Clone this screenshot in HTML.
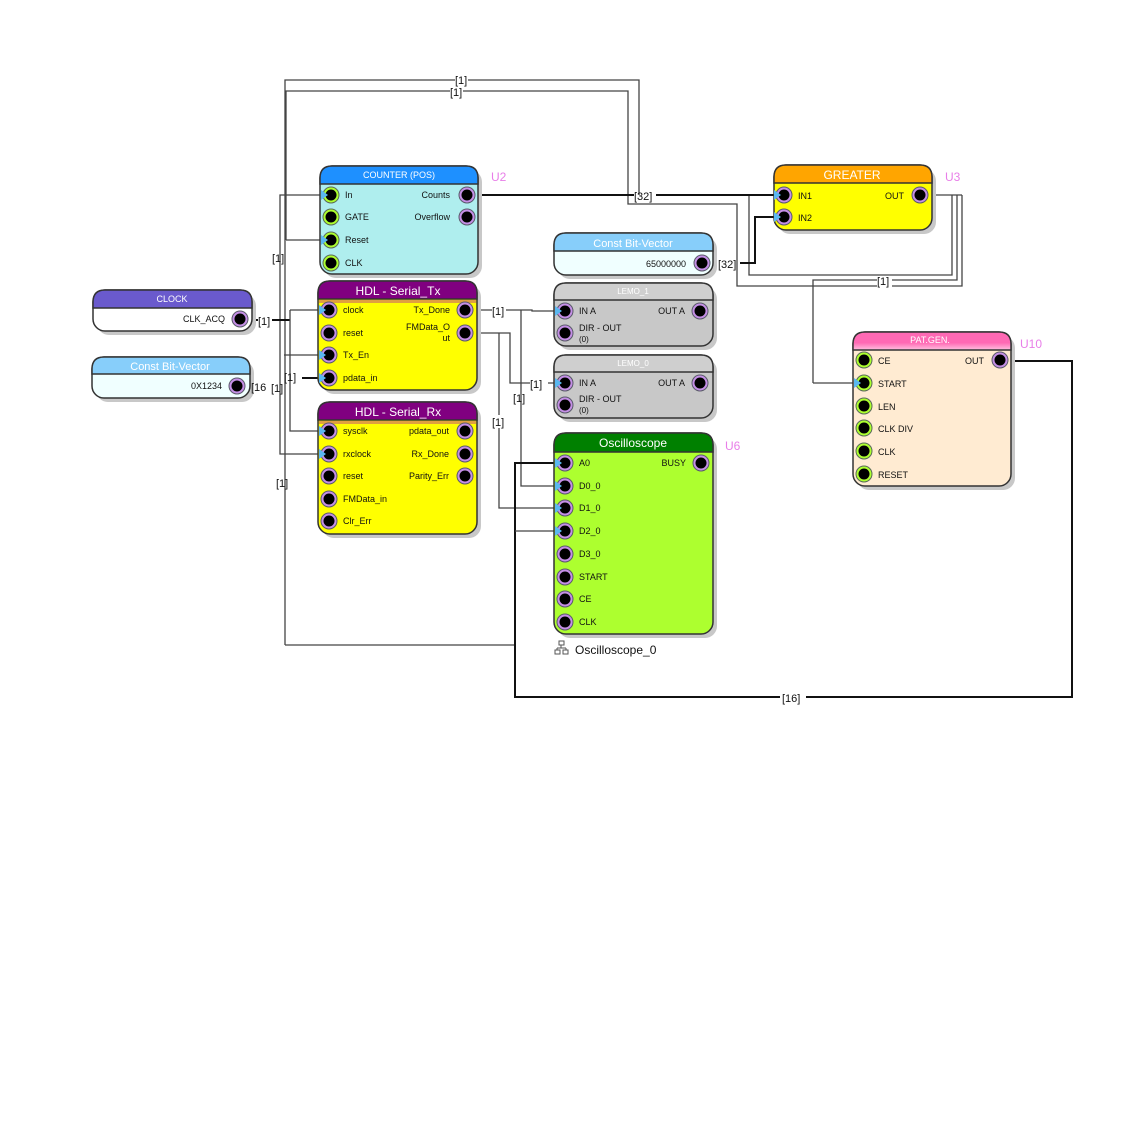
<!DOCTYPE html>
<html><head><meta charset="utf-8"><style>
html,body{margin:0;padding:0;background:#fff;width:1132px;height:1122px;overflow:hidden}
svg{display:block;font-family:"Liberation Sans",Arial,sans-serif}
.w{fill:none;stroke:#444;stroke-width:1.3}
.wb{fill:none;stroke:#111;stroke-width:2}
.lb{font-size:11px;fill:#111}
.pl{font-size:9px;fill:#111}
.ht{font-size:12px;fill:#fff;text-anchor:middle}
.hs{font-size:9px;fill:#fff;text-anchor:middle}
.u{font-size:12px;fill:#e87ee8}
.bx{stroke:#333;stroke-width:1.5}
.sh{fill:#c8c8c8}
</style></head><body>
<svg width="1132" height="1122" viewBox="0 0 1132 1122">
<defs>
<g id="pg"><circle r="8" fill="#adff2f" stroke="#5a6a5a" stroke-width="1"/><circle r="5.5" fill="#000"/></g>
<g id="pv"><circle r="8" fill="#c58fe6" stroke="#5a5a6a" stroke-width="1"/><circle r="5.5" fill="#000"/></g>
<polygon id="ar" points="-10,-5 -3,0 -10,5" fill="#5ab8f0"/>
</defs>

<!-- wires -->
<path class="w" d="M285,645 V80 H455 M468,80 H639 V195"/>
<path class="w" d="M286,240 V91 H450 M463,91 H628 V204 H737 V286 H877 M892,286 H962 V195"/>
<path class="w" d="M286,240 H320"/>
<path class="w" d="M320,195 H280 V454 H320"/>
<path class="w" d="M285,645 H515"/>
<path class="w" d="M749,195 V275 H952 V195 M813,383 V280 H877 M892,280 H957 V195 M932,195 H962"/>
<path class="w" d="M813,383 H853"/>
<path class="wb" d="M478,195 H634 M656,195 H774"/>
<path class="wb" d="M740,263 H755 V217 H774"/>
<path class="wb" d="M250,320 H258 M272,320 H290"/>
<path class="w" d="M290,310 V431 H320 M290,310 H320 M284,355 H320"/>
<path class="wb" d="M302,378 H318"/>
<path class="w" d="M465,310 H492 M506,310 H532 V311 H554 M521,310 V486 H554"/>
<path class="w" d="M465,333 H510 V383 H530 M548,383 H554 M499,333 V415 M499,428 V508 H554"/>
<path class="wb" d="M554,463 H515 V697 H780 M806,697 H1072 V361 H1000"/>
<path class="w" d="M515,531 H554"/>

<!-- COUNTER -->
<rect class="sh" x="324" y="170" width="158" height="108" rx="12"/>
<rect class="bx" x="320" y="166" width="158" height="108" rx="12" fill="#afeeee"/>
<path d="M320,184 V178 Q320,166 332,166 H466 Q478,166 478,178 V184 Z" fill="#1e90ff" class="bx"/>
<text class="hs" x="399" y="178">COUNTER (POS)</text>
<text class="u" x="491" y="181">U2</text>
<use href="#pg" x="331" y="195"/><use href="#ar" x="331" y="195"/>
<use href="#pg" x="331" y="217"/>
<use href="#pg" x="331" y="240"/><use href="#ar" x="331" y="240"/>
<use href="#pg" x="331" y="263"/>
<use href="#pv" x="467" y="195"/><use href="#pv" x="467" y="217"/>
<g class="pl"><text x="345" y="198">In</text><text x="345" y="220">GATE</text><text x="345" y="243">Reset</text><text x="345" y="266">CLK</text>
<text x="450" y="198" text-anchor="end">Counts</text><text x="450" y="220" text-anchor="end">Overflow</text></g>

<!-- CLOCK -->
<rect class="sh" x="97" y="294" width="159" height="41" rx="12"/>
<rect class="bx" x="93" y="290" width="159" height="41" rx="12" fill="#fff"/>
<path d="M93,308 V302 Q93,290 105,290 H240 Q252,290 252,302 V308 Z" fill="#6a5acd" class="bx"/>
<text class="hs" x="172" y="302">CLOCK</text>
<use href="#pv" x="240" y="319"/>
<text class="pl" x="225" y="322" text-anchor="end">CLK_ACQ</text>

<!-- Const 1 -->
<rect class="sh" x="96" y="361" width="158" height="41" rx="12"/>
<rect class="bx" x="92" y="357" width="158" height="41" rx="12" fill="#f0ffff"/>
<path d="M92,374 V369 Q92,357 104,357 H238 Q250,357 250,369 V374 Z" fill="#87cefa" class="bx"/>
<text class="ht" x="170" y="370" style="font-size:11px">Const Bit-Vector</text>
<use href="#pv" x="237" y="386"/>
<text class="pl" x="222" y="389" text-anchor="end">0X1234</text>

<!-- Serial_Tx -->
<rect class="sh" x="322" y="285" width="159" height="109" rx="12"/>
<rect class="bx" x="318" y="281" width="159" height="109" rx="12" fill="#ffff00"/>
<path d="M318,299 V293 Q318,281 330,281 H465 Q477,281 477,293 V299 Z" fill="#800080" class="bx"/>
<rect x="319" y="300" width="157" height="3" fill="#e0a040"/>
<text class="ht" x="398" y="295">HDL - Serial_Tx</text>
<use href="#pv" x="329" y="310"/><use href="#ar" x="329" y="310"/>
<use href="#pv" x="329" y="333"/>
<use href="#pv" x="329" y="355"/><use href="#ar" x="329" y="355"/>
<use href="#pv" x="329" y="378"/><use href="#ar" x="329" y="378"/>
<use href="#pv" x="465" y="310"/><use href="#pv" x="465" y="333"/>
<g class="pl"><text x="343" y="313">clock</text><text x="343" y="336">reset</text><text x="343" y="358">Tx_En</text><text x="343" y="381">pdata_in</text>
<text x="450" y="313" text-anchor="end">Tx_Done</text><text x="450" y="330" text-anchor="end">FMData_O</text><text x="450" y="341" text-anchor="end">ut</text></g>

<!-- Serial_Rx -->
<rect class="sh" x="322" y="406" width="159" height="132" rx="12"/>
<rect class="bx" x="318" y="402" width="159" height="132" rx="12" fill="#ffff00"/>
<path d="M318,420 V414 Q318,402 330,402 H465 Q477,402 477,414 V420 Z" fill="#800080" class="bx"/>
<rect x="319" y="421" width="157" height="3" fill="#e0a040"/>
<text class="ht" x="398" y="416">HDL - Serial_Rx</text>
<use href="#pv" x="329" y="431"/><use href="#ar" x="329" y="431"/>
<use href="#pv" x="329" y="454"/><use href="#ar" x="329" y="454"/>
<use href="#pv" x="329" y="476"/><use href="#pv" x="329" y="499"/><use href="#pv" x="329" y="521"/>
<use href="#pv" x="465" y="431"/><use href="#pv" x="465" y="454"/><use href="#pv" x="465" y="476"/>
<g class="pl"><text x="343" y="434">sysclk</text><text x="343" y="457">rxclock</text><text x="343" y="479">reset</text><text x="343" y="502">FMData_in</text><text x="343" y="524">Clr_Err</text>
<text x="449" y="434" text-anchor="end">pdata_out</text><text x="449" y="457" text-anchor="end">Rx_Done</text><text x="449" y="479" text-anchor="end">Parity_Err</text></g>

<!-- Const 2 -->
<rect class="sh" x="558" y="237" width="159" height="42" rx="12"/>
<rect class="bx" x="554" y="233" width="159" height="42" rx="12" fill="#f0ffff"/>
<path d="M554,251 V245 Q554,233 566,233 H701 Q713,233 713,245 V251 Z" fill="#87cefa" class="bx"/>
<text class="ht" x="633" y="247" style="font-size:11px">Const Bit-Vector</text>
<use href="#pv" x="702" y="263"/>
<text class="pl" x="686" y="267" text-anchor="end">65000000</text>

<!-- LEMO_1 -->
<rect class="sh" x="558" y="287" width="159" height="63" rx="12"/>
<rect class="bx" x="554" y="283" width="159" height="63" rx="12" fill="#c8c8c8"/>
<path d="M554,300 V295 Q554,283 566,283 H701 Q713,283 713,295 V300 Z" fill="#cfcfcf" stroke="#333" stroke-width="1.5"/>
<text class="hs" x="633" y="294" style="font-size:8px">LEMO_1</text>
<use href="#pv" x="565" y="311"/><use href="#ar" x="565" y="311"/><use href="#pv" x="565" y="333"/><use href="#pv" x="700" y="311"/>
<g class="pl"><text x="579" y="314">IN A</text><text x="579" y="331">DIR - OUT</text><text x="579" y="342" style="font-size:8px">(0)</text><text x="685" y="314" text-anchor="end">OUT A</text></g>

<!-- LEMO_0 -->
<rect class="sh" x="558" y="359" width="159" height="63" rx="12"/>
<rect class="bx" x="554" y="355" width="159" height="63" rx="12" fill="#c8c8c8"/>
<path d="M554,372 V367 Q554,355 566,355 H701 Q713,355 713,367 V372 Z" fill="#cfcfcf" stroke="#333" stroke-width="1.5"/>
<text class="hs" x="633" y="366" style="font-size:8px">LEMO_0</text>
<use href="#pv" x="565" y="383"/><use href="#ar" x="565" y="383"/><use href="#pv" x="565" y="405"/><use href="#pv" x="700" y="383"/>
<g class="pl"><text x="579" y="386">IN A</text><text x="579" y="402">DIR - OUT</text><text x="579" y="413" style="font-size:8px">(0)</text><text x="685" y="386" text-anchor="end">OUT A</text></g>

<!-- Oscilloscope -->
<rect class="sh" x="558" y="437" width="159" height="201" rx="12"/>
<rect class="bx" x="554" y="433" width="159" height="201" rx="12" fill="#adff2f"/>
<path d="M554,452 V445 Q554,433 566,433 H701 Q713,433 713,445 V452 Z" fill="#008000" class="bx"/>
<text class="ht" x="633" y="447">Oscilloscope</text>
<text class="u" x="725" y="450">U6</text>
<use href="#pv" x="565" y="463"/><use href="#ar" x="565" y="463"/>
<use href="#pv" x="565" y="486"/><use href="#ar" x="565" y="486"/>
<use href="#pv" x="565" y="508"/><use href="#ar" x="565" y="508"/>
<use href="#pv" x="565" y="531"/><use href="#ar" x="565" y="531"/>
<use href="#pv" x="565" y="554"/><use href="#pv" x="565" y="577"/><use href="#pv" x="565" y="599"/><use href="#pv" x="565" y="622"/>
<use href="#pv" x="701" y="463"/>
<g class="pl"><text x="579" y="466">A0</text><text x="579" y="489">D0_0</text><text x="579" y="511">D1_0</text><text x="579" y="534">D2_0</text><text x="579" y="557">D3_0</text><text x="579" y="580">START</text><text x="579" y="602">CE</text><text x="579" y="625">CLK</text>
<text x="686" y="466" text-anchor="end">BUSY</text></g>
<g fill="none" stroke="#555" stroke-width="1"><rect x="559" y="641" width="5" height="4"/><rect x="555" y="650" width="5" height="4"/><rect x="563" y="650" width="5" height="4"/><path d="M561,645 V648 M557,648 H566 M557,648 V650 M566,648 V650"/></g>
<text x="575" y="654" style="font-size:12px;fill:#111">Oscilloscope_0</text>

<!-- GREATER -->
<rect class="sh" x="778" y="169" width="158" height="65" rx="12"/>
<rect class="bx" x="774" y="165" width="158" height="65" rx="12" fill="#ffff00"/>
<path d="M774,183 V177 Q774,165 786,165 H920 Q932,165 932,177 V183 Z" fill="#ffa500" class="bx"/>
<text class="ht" x="852" y="179">GREATER</text>
<text class="u" x="945" y="181">U3</text>
<use href="#pv" x="784" y="195"/><use href="#ar" x="784" y="195"/>
<use href="#pv" x="784" y="217"/><use href="#ar" x="784" y="217"/>
<use href="#pv" x="920" y="195"/>
<g class="pl"><text x="798" y="199">IN1</text><text x="798" y="221">IN2</text><text x="904" y="199" text-anchor="end">OUT</text></g>

<!-- PAT.GEN -->
<rect class="sh" x="857" y="336" width="158" height="154" rx="12"/>
<rect class="bx" x="853" y="332" width="158" height="154" rx="12" fill="#ffebd2"/>
<defs><linearGradient id="pk" x1="0" y1="0" x2="0" y2="1"><stop offset="0" stop-color="#ff69b4"/><stop offset="0.6" stop-color="#ff69b4"/><stop offset="1" stop-color="#ffc0e0"/></linearGradient></defs>
<path d="M853,350 V344 Q853,332 865,332 H999 Q1011,332 1011,344 V350 Z" fill="url(#pk)" class="bx"/>
<text class="hs" x="930" y="343">PAT.GEN.</text>
<text class="u" x="1020" y="348">U10</text>
<use href="#pg" x="864" y="360"/>
<use href="#pg" x="864" y="383"/><use href="#ar" x="864" y="383"/>
<use href="#pg" x="864" y="406"/><use href="#pg" x="864" y="428"/><use href="#pg" x="864" y="451"/><use href="#pg" x="864" y="474"/>
<use href="#pv" x="1000" y="360"/>
<g class="pl"><text x="878" y="364">CE</text><text x="878" y="387">START</text><text x="878" y="410">LEN</text><text x="878" y="432">CLK DIV</text><text x="878" y="455">CLK</text><text x="878" y="478">RESET</text>
<text x="984" y="364" text-anchor="end">OUT</text></g>

<!-- wire labels -->
<g class="lb">
<text x="455" y="84">[1]</text>
<text x="450" y="96">[1]</text>
<text x="634" y="200">[32]</text>
<text x="718" y="268">[32]</text>
<text x="877" y="285">[1]</text>
<text x="272" y="262">[1]</text>
<text x="258" y="325">[1]</text>
<text x="251" y="391">[16</text>
<text x="271" y="392">[1]</text>
<text x="284" y="381">[1]</text>
<text x="276" y="487">[1]</text>
<text x="492" y="315">[1]</text>
<text x="530" y="388">[1]</text>
<text x="513" y="402">[1]</text>
<text x="492" y="426">[1]</text>
<text x="782" y="702">[16]</text>
</g>
</svg>
</body></html>
